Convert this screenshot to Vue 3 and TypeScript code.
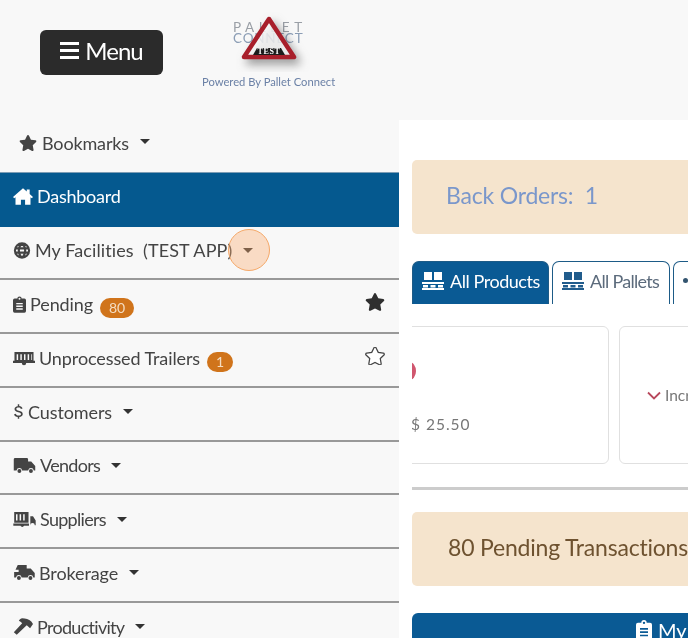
<template>
  <div class="page">
    <header class="top-bar">
      <button class="menu-btn"><span class="bars"><i /><i /><i /></span>Menu</button>
      <div class="brand">
        <svg class="logo" width="133" height="60" viewBox="0 0 133 60">
          <text x="31" y="20" class="logo-pallet">PALLET</text>
          <text x="31" y="31" class="logo-connect">CONNECT</text>
          <g class="logo-mark">
            <path d="M67 7 L92 45 L42 45 Z" fill="#fff" fill-opacity=".78" stroke="#a81f2b" stroke-width="4.500" stroke-linejoin="round" />
          </g>
          <path d="M55 36h24l4 7H51z" fill="#1c1c1c" />
          <text x="67" y="42" text-anchor="middle" class="logo-test">TEST</text>
        </svg>
        <div class="powered">Powered By Pallet Connect</div>
      </div>
    </header>

    <div class="content">
      <nav class="sidebar">
        <div class="bookmarks">
          <svg class="ic" width="18" height="16" viewBox="0 0 576 512"><path :d="icons.star" /></svg>
          <span>Bookmarks</span><b class="caret" />
        </div>
        <div class="nav-row active">
          <svg class="ic" width="20" height="17" viewBox="0 0 24 20"><path :d="icons.home" /></svg>
          <span>Dashboard</span>
        </div>
        <div v-for="item in navItems" :key="item.label" class="nav-row">
          <svg class="ic" :width="item.w" height="17" :viewBox="item.box" :class="{ stroked: item.stroked }"><path :d="item.icon" /></svg>
          <span :class="{ tight: item.tight, wide: item.stroked }">{{ item.label }}</span>
          <em v-if="item.badge" class="badge">{{ item.badge }}</em>
          <b v-if="item.caret" class="caret" />
          <svg v-if="item.pin" class="pin" :class="{ outline: item.pin === 'off' }" width="20" height="18" viewBox="0 0 576 512"><path :d="icons.star" /></svg>
          <div v-if="item.spot" class="spot" />
        </div>
      </nav>

      <main class="main">
        <div class="alert back">Back Orders:&nbsp; 1</div>

        <div class="tabs">
          <div class="tab on">
            <svg width="22" height="18" viewBox="0 0 22 18"><path :d="icons.pallet" /></svg>All Products
          </div>
          <div class="tab">
            <svg width="22" height="18" viewBox="0 0 22 18"><path :d="icons.pallet" /></svg>All Pallets
          </div>
          <div class="tab third"><i class="dot" /></div>
        </div>

        <div class="cards">
          <div class="card first">
            <i class="red-dot" />
            <span class="price">$ 25.50</span>
          </div>
          <div class="card second">
            <svg width="14" height="9" viewBox="0 0 14 9"><path d="M1 1.500l6 6 6-6" fill="none" stroke="#b8485c" stroke-width="1.800" /></svg>
            <span>Increase</span>
          </div>
        </div>

        <hr class="rule" />

        <div class="alert pending">80 Pending Transactions</div>

        <div class="panel-head">
          <svg width="16" height="20" viewBox="0 0 24 30"><path :d="icons.clipboard" fill="#fff" fill-rule="evenodd" /></svg>
          <span>My Facilities</span>
        </div>
      </main>
    </div>
  </div>
</template>

<script setup lang="ts">
interface NavItem {
  label: string
  icon: string
  box: string
  w: number
  badge?: string
  caret?: boolean
  pin?: 'on' | 'off'
  spot?: boolean
  stroked?: boolean
  tight?: boolean
}

const icons = {
  star: 'M259.300 17.800L194 150.200 47.900 171.500c-26.200 3.800-36.700 36.100-17.700 54.600l105.700 103-25 145.500c-4.500 26.300 23.200 46 46.400 33.700L288 439.600l130.700 68.700c23.200 12.200 50.900-7.400 46.400-33.700l-25-145.500 105.700-103c19-18.500 8.500-50.800-17.700-54.600L382 150.200 316.700 17.800c-11.700-23.600-45.600-23.900-57.400 0z',
  home: 'M12 0L0 10.500l1.500 1.700L3 11v9h6.500v-6h5v6H21v-9l1.500 1.200 1.500-1.700L20 7V1.500h-3.500V4z',
  clipboard: 'M3 4h5a4 4 0 0 1 8 0h5a3 3 0 0 1 3 3v20a3 3 0 0 1-3 3H3a3 3 0 0 1-3-3V7a3 3 0 0 1 3-3zM12 2.500a1.800 1.800 0 1 0 0 3.600 1.800 1.800 0 0 0 0-3.600zM6 12v2.500h12V12zM6 17v2.500h12V17zM6 22v2.500h12V22z',
  globe: 'M12 2a10 10 0 1 0 0 20 10 10 0 0 0 0-20zM12 2c-6 5-6 15 0 20M12 2c6 5 6 15 0 20M3 9h18M3 15h18',
  trailer: 'M2 2h26v12h2v3H18a3 3 0 0 1-6 0H0v-3h2zM5 5v8h2V5zM10 5v8h2V5zM15 5v8h2V5zM20 5v8h2V5zM25 5v8h1V5z',
  dollar: 'M6.500 0h2v2.500c2.200.3 4 1.500 4.500 3.500l-2.300.6c-.4-1.200-1.500-1.900-3.200-1.900-1.900 0-3 .8-3 2 0 1.300 1.200 1.800 3.500 2.300 3 .7 5.300 1.600 5.300 4.400 0 2.300-1.800 3.800-4.800 4.200V20h-2v-2.400c-2.700-.3-4.600-1.700-5-4l2.300-.5c.4 1.500 1.700 2.400 3.700 2.400 2.100 0 3.400-.8 3.400-2.100 0-1.400-1.300-1.900-3.800-2.500-2.900-.7-5-1.500-5-4.200 0-2.200 1.700-3.700 4.400-4z',
  truck: 'M1.500 1h13a1.500 1.500 0 0 1 1.500 1.500V5h3.500L24 10v5h-1.600a3.200 3.200 0 0 0-6.300 0H9.400a3.200 3.200 0 0 0-6.300 0H0V2.500A1.500 1.500 0 0 1 1.500 1zM6.300 13.500a2.200 2.200 0 1 1 0 4.400 2.200 2.200 0 0 1 0-4.400zM19.200 13.500a2.200 2.200 0 1 1 0 4.400 2.200 2.200 0 0 1 0-4.400z',
  supplier: 'M1 1h16v12H1zM3 3.500v7h1.700v-7zM7 3.500v7h1.700v-7zM11 3.500v7h1.700v-7zM0 14h17.500v2.500H12a2.200 2.200 0 0 1-4 0H0zM19 6h3l3 4.500V16h-1a2.500 2.500 0 0 0-5 0z',
  broker: 'M5 1h10v4h4.500L24 10v5h-1.600a3.200 3.200 0 0 0-6.300 0H9.400a3.200 3.200 0 0 0-6.300 0H1V9h5V6.500H2.500zM6.300 13.500a2.200 2.200 0 1 1 0 4.400 2.200 2.200 0 0 1 0-4.400zM19.200 13.500a2.200 2.200 0 1 1 0 4.400 2.200 2.200 0 0 1 0-4.400z',
  hammer: 'M11 0c4 0 8 1 11 4l2 3-3.500 5-4-3.500-1 1L4.500 20 1 17l10-11-1.500-1.500L7 3c1-1.500 2.500-3 4-3z',
  pallet: 'M2 0h8v8H2zM12 0h8v8h-8zM0 10h22v2H0zM1 13h5v2.500H1zM8.500 13h5v2.500h-5zM16 13h5v2.500h-5zM0 16h22v2H0z',
}

const navItems: NavItem[] = [
  { label: 'My Facilities\u00a0 (TEST APP)', icon: icons.globe, box: '0 0 24 24', w: 18, caret: true, spot: true, stroked: true },
  { label: 'Pending', icon: icons.clipboard, box: '0 0 24 30', w: 13, badge: '80', pin: 'on' },
  { label: 'Unprocessed Trailers', icon: icons.trailer, box: '0 0 30 19', w: 22, badge: '1', pin: 'off' },
  { label: 'Customers', icon: icons.dollar, box: '0 0 15 20', w: 11, caret: true },
  { label: 'Vendors', icon: icons.truck, box: '0 0 24 19', w: 23, caret: true, tight: true },
  { label: 'Suppliers', icon: icons.supplier, box: '0 0 25 19', w: 23, caret: true, tight: true },
  { label: 'Brokerage', icon: icons.broker, box: '0 0 24 19', w: 22, caret: true },
  { label: 'Productivity', icon: icons.hammer, box: '0 0 24 20', w: 20, caret: true, tight: true },
]
</script>

<style>
html,
body {
  margin: 0;
  overflow: hidden;
  background: #f8f8f8;
}
</style>

<style scoped>
.page {
  width: 688px;
  height: 638px;
  overflow: hidden;
  background: #f8f8f8;
  color: #444;
  font-family: Lato, 'Open Sans', sans-serif;
  font-size: 18px;
  filter: blur(0.5px);
}

.top-bar {
  display: flex;
  height: 120px;
  box-sizing: border-box;
  padding: 12px 0 0 40px;
}

.menu-btn {
  display: flex;
  align-items: center;
  justify-content: center;
  gap: 6px;
  width: 123px;
  height: 45px;
  margin-top: 18px;
  padding: 0 0 5px;
  border: 0;
  border-radius: 6px;
  background: #2b2b2b;
  color: #fff;
  font: 24px Lato, sans-serif;
  letter-spacing: -1px;
}

.bars {
  display: flex;
  flex-direction: column;
  gap: 4px;
}

.bars i {
  display: block;
  width: 19px;
  height: 3px;
  background: #fff;
}

.brand {
  position: relative;
  width: 133px;
  margin-left: 39px;
}

.logo {
  display: block;
}

.logo-pallet,
.logo-connect {
  font-size: 13.500px;
}

.logo-pallet {
  fill: #9a9fa6;
  letter-spacing: 4.600px;
}

.logo-connect {
  fill: #8b9db5;
  letter-spacing: 0.8px;
}

.logo-mark {
  filter: drop-shadow(4px 5px 5px rgba(60, 60, 60, 0.55));
}

.logo-test {
  fill: #fff;
  font: bold 8px 'Liberation Serif', serif;
  letter-spacing: 0.6px;
}

.powered {
  margin-top: 3px;
  color: #6b81a6;
  font-size: 11.200px;
  line-height: 14px;
  white-space: nowrap;
}

.content {
  display: flex;
  height: 518px;
}

.sidebar {
  flex: none;
  width: 399px;
}

.bookmarks {
  display: flex;
  align-items: center;
  height: 52px;
  box-sizing: border-box;
  padding: 0 0 7px 19px;
  gap: 5px;
  letter-spacing: -0.15px;
}

.nav-row {
  position: relative;
  display: flex;
  align-items: center;
  height: 53.750px;
  box-sizing: border-box;
  padding: 0 13px 4px;
  gap: 4px;
  border-bottom: 2px solid #999;
  letter-spacing: -0.1px;
}

.nav-row.active {
  height: 54.500px;
  padding-bottom: 6px;
  background: #05598f;
  color: #fff;
  border-bottom: 0;
  box-shadow: inset 0 1px 0 #7d9db5;
  letter-spacing: -0.25px;
}

.tight {
  letter-spacing: -0.7px;
}

.wide {
  letter-spacing: 0.1px;
}

.ic {
  flex: none;
  fill: currentColor;
  fill-rule: evenodd;
}

.ic.stroked {
  fill: none;
  stroke: currentColor;
  stroke-width: 3;
}

.caret {
  width: 0;
  height: 0;
  margin-left: 7px;
  border-top: 5px solid #333;
  border-left: 5px solid transparent;
  border-right: 5px solid transparent;
}

.bookmarks .caret {
  margin-left: 6px;
  margin-top: -2px;
}

.badge {
  margin: 8px 0 0 3px;
  padding: 0 9px;
  border-radius: 11px;
  background: #d0741b;
  color: #f4dcc0;
  font-size: 14px;
  font-style: normal;
  line-height: 20px;
}

.pin {
  position: absolute;
  right: 14px;
  top: 13px;
  fill: #2f2f2f;
}

.pin.outline {
  fill: #fff;
  stroke: #444;
  stroke-width: 36;
}

.spot {
  position: absolute;
  left: 228px;
  top: 2px;
  width: 42px;
  height: 42px;
  box-sizing: border-box;
  border: 1.500px solid #f5a868;
  border-radius: 50%;
  background: rgba(249, 170, 110, 0.38);
}

.main {
  flex: 1;
  min-width: 0;
  overflow: hidden;
  box-sizing: border-box;
  padding: 40px 0 0 13px;
  background: #fff;
}

.alert {
  display: flex;
  align-items: center;
  width: 420px;
  height: 74px;
  box-sizing: border-box;
  padding: 0 0 5px 34px;
  border-radius: 5px;
  background: #f5e4cd;
  font-size: 23px;
  letter-spacing: -0.2px;
  white-space: nowrap;
}

.alert.back {
  color: #7a97cb;
}

.alert.pending {
  padding-left: 36px;
  color: #6e5230;
}

.tabs {
  display: flex;
  gap: 3px;
  width: 420px;
  height: 43px;
  margin-top: 27px;
}

.tab {
  display: flex;
  align-items: center;
  gap: 6px;
  box-sizing: border-box;
  width: 118px;
  padding: 0 0 4px 9px;
  border: 1.500px solid #1d5b87;
  border-bottom: 0;
  border-radius: 7px 7px 0 0;
  color: #5c6b7c;
  letter-spacing: -0.7px;
  white-space: nowrap;
}

.tab svg {
  flex: none;
  fill: #215c8c;
}

.tab.on {
  width: 137px;
  background: #0a5a94;
  color: #fff;
  letter-spacing: -0.45px;
}

.tab.on svg {
  fill: #fff;
}

.third {
  width: 60px;
}

.dot {
  width: 5px;
  height: 5px;
  margin-top: -2px;
  border-radius: 50%;
  background: #33546f;
}

.cards {
  display: flex;
  gap: 10px;
  width: 420px;
  margin-top: 22px;
  overflow: hidden;
}

.card {
  position: relative;
  flex: none;
  height: 138px;
  box-sizing: border-box;
  border: 1.500px solid #e0e0e0;
  border-radius: 6px;
}

.card.first {
  width: 297px;
  margin-left: -100px;
}

.red-dot {
  position: absolute;
  left: 90px;
  top: 35px;
  width: 13px;
  height: 18px;
  border-radius: 50%;
  background: #d0566e;
}

.price {
  position: absolute;
  left: 98px;
  top: 88px;
  color: #777;
  font-size: 15.500px;
  letter-spacing: 1px;
}

.card.second {
  display: flex;
  align-items: center;
  gap: 4px;
  width: 200px;
  padding-left: 27px;
  color: #777;
  font-size: 15.500px;
}

.rule {
  width: 420px;
  height: 3px;
  margin: 23px 0 22px;
  border: 0;
  background: #ccc;
}

.panel-head {
  display: flex;
  align-items: center;
  gap: 6px;
  width: 480px;
  height: 30px;
  margin-top: 27px;
  padding: 3px 0 0 224px;
  box-sizing: border-box;
  border-radius: 6px 6px 0 0;
  background: #0a5a94;
  color: #fff;
  font-size: 20px;
  white-space: nowrap;
}
</style>
